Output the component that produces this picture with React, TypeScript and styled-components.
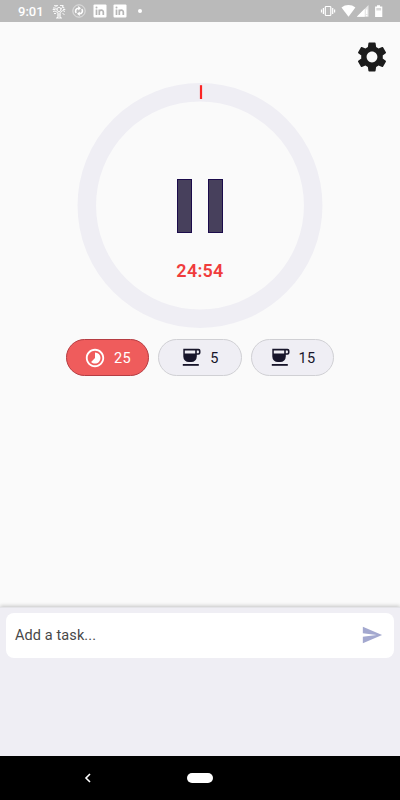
import React from "react";
import styled, { createGlobalStyle } from "styled-components";
import { MdSettings, MdTimelapse, MdSend } from "react-icons/md";

const GlobalStyle = createGlobalStyle`
  * { box-sizing: border-box; }
  body { margin: 0; background: #fafafa; font-family: Roboto, "Liberation Sans", sans-serif; }
`;

const Screen = styled.div`
  width: 400px;
  height: 800px;
  display: flex;
  flex-direction: column;
  background: #fafafa;
  overflow: hidden;
`;

const StatusBar = styled.header`
  height: 22px;
  flex: none;
  display: flex;
  align-items: center;
  padding: 0 16px 0 18px;
  background: #bababa;
  color: #fff;
`;

const Clock = styled.span`
  width: 34px;
  padding-top: 1px;
  font-size: 13px;
  font-weight: 500;
  line-height: 22px;
  white-space: nowrap;
`;

const Notifications = styled.div`
  display: flex;
  align-items: center;
  gap: 6.3px;
  flex: 1;
`;

const SystemIcons = styled.div`
  display: flex;
  align-items: center;
`;

const Dot = styled.span`
  width: 4px;
  height: 4px;
  margin-left: 5px;
  border-radius: 50%;
  background: #fff;
`;

const Main = styled.main`
  height: 585px;
  flex: none;
  display: flex;
  flex-direction: column;
  align-items: center;
`;

const TopBar = styled.div`
  width: 100%;
  height: 61px;
  display: flex;
  justify-content: flex-end;
  padding: 17px 10px 0 0;
`;

const IconButton = styled.button<{ $color: string }>`
  display: flex;
  height: max-content;
  padding: 0;
  border: 0;
  background: none;
  color: ${(p) => p.$color};
`;

const Dial = styled.section`
  display: grid;
  width: 246px;
  height: 245px;
  > * { grid-area: 1 / 1; }
`;

const DialFace = styled.div`
  display: flex;
  flex-direction: column;
  align-items: center;
  padding-top: 96px;
`;

const PauseButton = styled.button`
  display: flex;
  gap: 16px;
  padding: 0;
  border: 0;
  background: none;
`;

const PauseBar = styled.span`
  width: 15px;
  height: 53.5px;
  background: #47405c;
  border: 1px solid #1b0b4b;
`;

const TimeLeft = styled.div`
  margin-top: 27.5px;
  font-size: 18px;
  line-height: 22px;
  font-weight: 600;
  letter-spacing: 0.25px;
  color: #f03c3c;
`;

const Modes = styled.div`
  display: flex;
  gap: 9px;
  margin-top: 11px;
`;

const ModeChip = styled.button<{ $active?: boolean }>`
  width: 83.5px;
  height: 37px;
  display: flex;
  align-items: center;
  justify-content: center;
  gap: 8px;
  padding: 0;
  border-radius: 19px;
  border: 1px solid ${(p) => (p.$active ? "#b53c42" : "#d0d0d4")};
  background: ${(p) => (p.$active ? "#ef5c5c" : "#efeef4")};
  color: ${(p) => (p.$active ? "#fff" : "#17152a")};
  font: 400 14.5px Roboto, sans-serif;
  letter-spacing: 0.3px;
`;

const Minutes = styled.span`
  padding-top: 1px;
`;

const TaskPanel = styled.section`
  height: 149px;
  flex: none;
  padding: 5px 6px;
  border-top: 1px solid #e4e4e8;
  background: #efeef4;
  box-shadow: 0 -1px 4px rgba(0, 0, 0, 0.22);
`;

const TaskField = styled.label`
  height: 44.5px;
  display: flex;
  align-items: center;
  justify-content: space-between;
  padding: 0 11px 0 9px;
  border-radius: 8px;
  background: #fff;
  color: #484848;
  font-size: 14.5px;
  letter-spacing: 0.1px;
`;

const NavBar = styled.nav`
  height: 44px;
  flex: none;
  display: grid;
  grid-template-columns: 176px 48px 176px;
  place-items: center;
  background: #000;
`;

const HomePill = styled.span`
  width: 26px;
  height: 10px;
  border-radius: 5px;
  background: #fff;
`;

const Tree = () => (
  <svg width="14" height="15" viewBox="0 0 14 14" fill="none" stroke="#fff" strokeWidth=".9">
    <path d="M5.4 13.5c.7-2 .5-4 .2-5.6M8.6 13.5c-.7-2-.5-4-.2-5.6M4 13.5h6M7 13V8M5.5 8 3 6.5 1 7M8.5 8l2.3-2 2.2 1M5.5 5.5l-2-2H1M8 5l2.500-2 2 .5" />
    <circle cx="7" cy="5" r="2.1" />
    <path d="M2 1.200h4M8 1h3.500M.7 5h2.800M11 5h2.300M2 9h2M10.500 9l2 1M3.500 2.500 5 1M10 1.500l2 1.500" />
  </svg>
);

const Sync = () => (
  <svg width="14" height="14" viewBox="0 0 14 14" fill="none" stroke="#fff">
    <circle cx="7" cy="7" r="6.2" strokeWidth=".7" opacity=".8" />
    <path d="M4.100 9C2.800 6.500 4 4.200 6.800 4.200M9.900 5c1.300 2.500.1 4.800-2.700 4.800" strokeWidth="1.600" />
    <path d="m6.200 2 2.800 2.200-2.800 2.200zM7.800 7.600 5 9.800 7.800 12z" fill="#fff" stroke="none" />
  </svg>
);

const LinkedIn = () => (
  <svg width="14" height="14" viewBox="0 0 14 14">
    <rect x=".5" y=".5" width="13" height="13" rx="1" fill="#fff" />
    <path d="M3.500 5.500V11M6.300 5.500V11M6.300 8c0-2.300 4-2.600 4 0v3" fill="none" stroke="#b5b5b5" strokeWidth="1.700" />
    <circle cx="3.500" cy="3.400" r="1" fill="#b5b5b5" />
  </svg>
);

const StatusGlyphs = () => (
  <svg width="64" height="14" viewBox="0 0 64 14" fill="#fff">
    <g fill="none" stroke="#fff" strokeWidth="1.200">
      <rect x="5.300" y="2.500" width="5.500" height="9" rx=".8" />
      <path d="M3.400 4v6M12.700 4v6M1.500 5.500v3M14.600 5.500v3" />
    </g>
    <path d="M21.500 3.500c4-3.300 9.900-3.300 13.900 0L28.500 12.700z" />
    <path d="M48.500 1v11.700H36.800z" opacity=".65" />
    <path d="M44.700 4.800v7.900h-7.900zM46 5.500h1.300v4.500H46zM46 11h1.300v1.300H46z" />
    <path d="M57 1.200h3v1.300h2.300V13h-7.200V2.500H57z" />
    <path d="M56.300 4h4.800v2.500h-4.800z" fill="#bababa" opacity=".55" />
  </svg>
);

const Cup = () => (
  <svg width="21" height="21" viewBox="0 0 21 21">
    <path d="M2.300 1.800h15.200a2 2 0 0 1 2 2v2a2 2 0 0 1-2 2h-1.700v1.700a5.600 5.600 0 0 1-5.600 5.600H7.900a5.600 5.600 0 0 1-5.600-5.600z" fill="#17152a" />
    <path d="M3.800 3.400h10.400v3H3.800zM15.800 3.400h1.400q.7 0 .7.700v1.500q0 .7-.7.700h-1.400z" fill="#efeef4" />
    <path d="M1.800 17h16v1.800h-16z" fill="#17152a" />
  </svg>
);

const modes = [
  { minutes: 25, active: true },
  { minutes: 5, active: false },
  { minutes: 15, active: false },
];

export default function App() {
  return (
    <>
      <GlobalStyle />
      <Screen>
        <StatusBar>
          <Clock>9:01</Clock>
          <Notifications>
            <Tree />
            <Sync />
            <LinkedIn />
            <LinkedIn />
            <Dot />
          </Notifications>
          <SystemIcons>
            <StatusGlyphs />
          </SystemIcons>
        </StatusBar>
        <Main>
          <TopBar>
            <IconButton $color="#1c1c1c" aria-label="Settings">
              <MdSettings size={36} />
            </IconButton>
          </TopBar>
          <Dial>
            <svg width="246" height="245" viewBox="0 0 246 245">
              <circle cx="123" cy="122.500" r="113.200" fill="none" stroke="#efeef4" strokeWidth="18.500" />
              <path d="M124 2.200v13.800" stroke="#fa2424" strokeWidth="2.200" />
            </svg>
            <DialFace>
              <PauseButton aria-label="Pause">
                <PauseBar />
                <PauseBar />
              </PauseButton>
              <TimeLeft>24:54</TimeLeft>
            </DialFace>
          </Dial>
          <Modes>
            {modes.map((mode) => (
              <ModeChip key={mode.minutes} $active={mode.active}>
                {mode.active ? <MdTimelapse size={22} /> : <Cup />}
                <Minutes>{mode.minutes}</Minutes>
              </ModeChip>
            ))}
          </Modes>
        </Main>
        <TaskPanel>
          <TaskField>
            Add a task...
            <IconButton $color="#a3a8cf" aria-label="Send">
              <MdSend size={22} />
            </IconButton>
          </TaskField>
        </TaskPanel>
        <NavBar>
          <svg width="8" height="12" viewBox="0 0 8 12" fill="none" stroke="#fff" strokeWidth="1.600">
            <path d="M6 2 2 6l4 4" />
          </svg>
          <HomePill />
        </NavBar>
      </Screen>
    </>
  );
}
